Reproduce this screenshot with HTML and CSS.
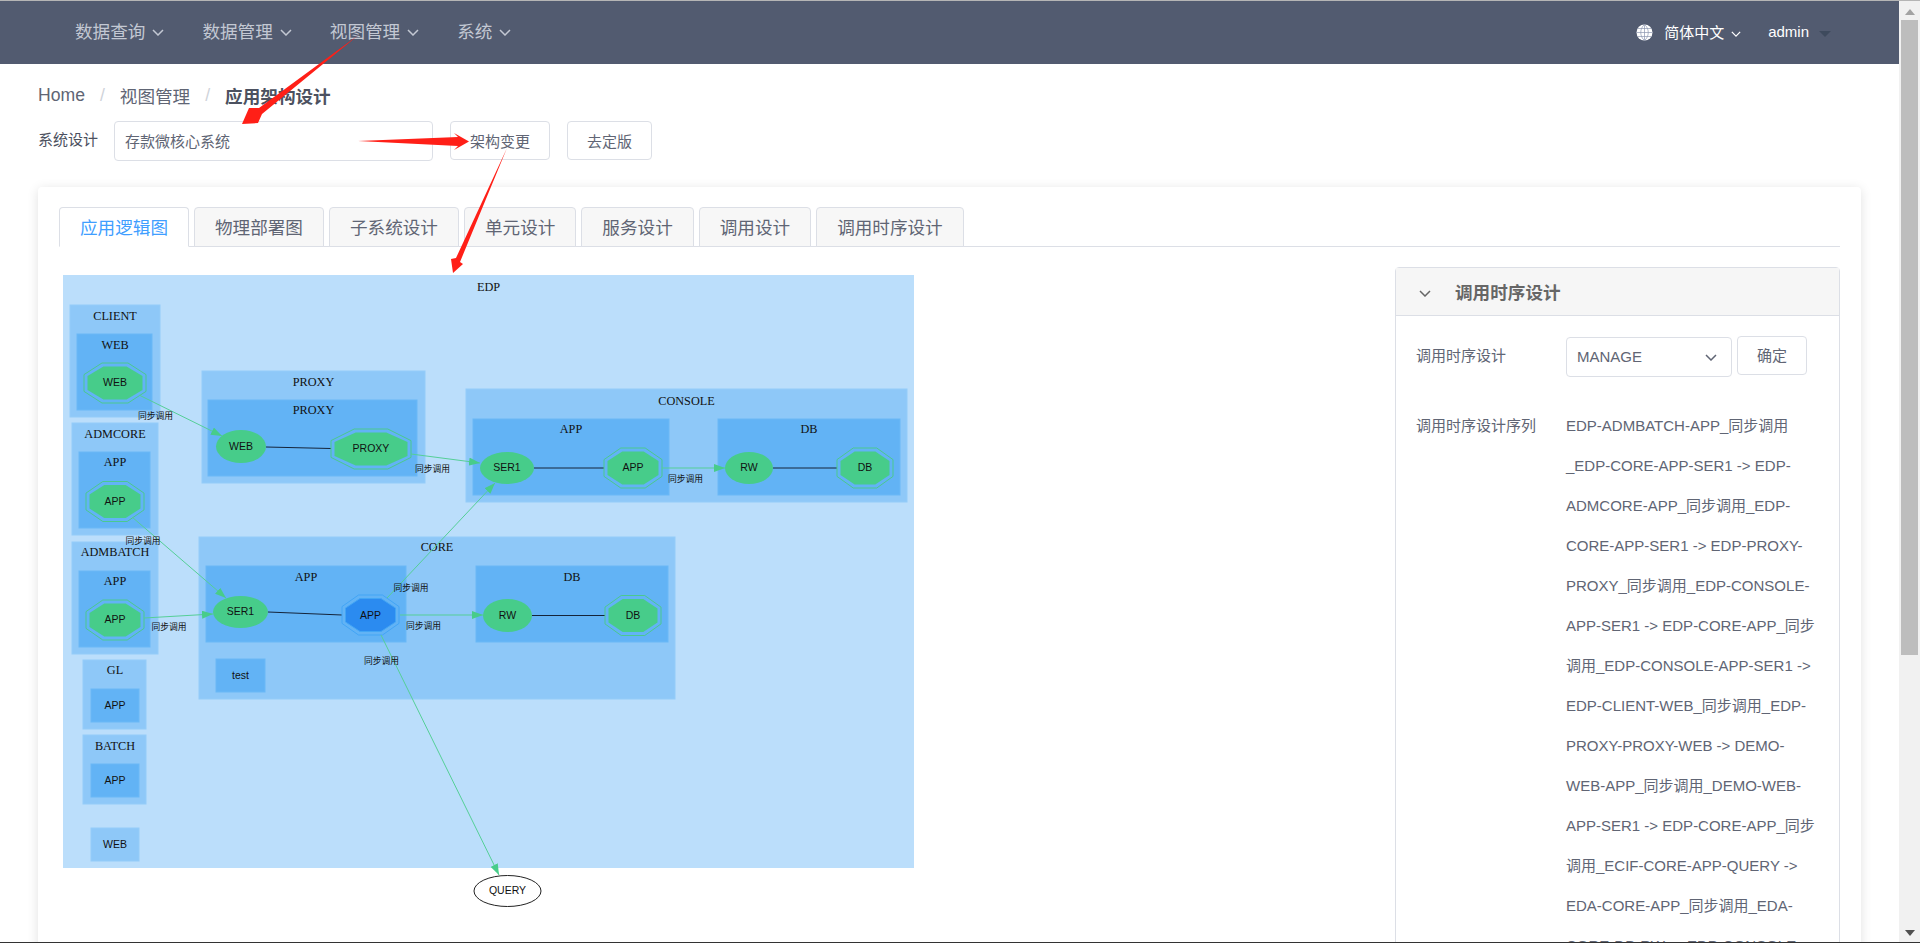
FILE: index.html

```html
<!DOCTYPE html>
<html lang="zh-CN">
<head>
  <meta charset="UTF-8" />
  <title>应用架构设计</title>
  <link rel="stylesheet" href="styles.css">
</head>
<body>

  <svg class="icon-defs" width="0" height="0">
    <symbol id="chevron" viewBox="0 0 12 7"><path d="M1 1 L6 6 L11 1" fill="none" stroke="currentColor" stroke-width="1.5"/></symbol>
  </svg>

  <div class="screen">
    <div class="page">
      <header class="topbar">
        <nav class="menu">
          <a class="menu-item">数据查询<svg class="chevron"><use href="#chevron"/></svg></a>
          <a class="menu-item">数据管理<svg class="chevron"><use href="#chevron"/></svg></a>
          <a class="menu-item">视图管理<svg class="chevron"><use href="#chevron"/></svg></a>
          <a class="menu-item">系统<svg class="chevron"><use href="#chevron"/></svg></a>
        </nav>
        <div class="topbar-right">
          <svg class="globe" viewBox="0 0 17 17">
            <circle cx="8.5" cy="8.5" r="8" fill="#fff"/>
            <path d="M.5 8.5h16M1.6 4.5h13.8M1.6 12.5h13.8M8.5 .5v16M8.5 .5c-5 4-5 12 0 16M8.5 .5c5 4 5 12 0 16" fill="none" stroke="#8d96b0" stroke-width=".7"/>
          </svg>
          <span class="lang">简体中文<svg class="chevron small"><use href="#chevron"/></svg></span>
          <span class="user">admin<i class="caret"></i></span>
        </div>
      </header>

      <div class="breadcrumb">
        <span>Home</span><i class="sep">/</i>
        <span>视图管理</span><i class="sep">/</i>
        <b>应用架构设计</b>
      </div>

      <div class="toolbar">
        <label class="toolbar-label">系统设计</label>
        <div class="text-input">存款微核心系统</div>
        <button class="btn">架构变更</button>
        <button class="btn">去定版</button>
      </div>

      <section class="card">
        <div class="tabs">
          <div class="tab active">应用逻辑图</div>
          <div class="tab">物理部署图</div>
          <div class="tab">子系统设计</div>
          <div class="tab">单元设计</div>
          <div class="tab">服务设计</div>
          <div class="tab">调用设计</div>
          <div class="tab">调用时序设计</div>
        </div>

        <div class="tab-body">
          <svg class="diagram" width="852" height="640" viewBox="63 275 852 640">
            <defs>
              <polygon id="oct" points="-.21,-.5 .21,-.5 .5,-.21 .5,.21 .21,.5 -.21,.5 -.5,.21 -.5,-.21" vector-effect="non-scaling-stroke"/>
              <marker id="head" markerUnits="userSpaceOnUse" markerWidth="11" markerHeight="8" refX="11" refY="4" orient="auto">
                <path d="M0 0 L11 4 L0 8 Z" fill="#48cc8a"/>
              </marker>
            </defs>

            <!-- clusters -->
            <rect class="c1" x="63" y="275" width="851" height="593"/>
            <rect class="c2" x="70" y="305" width="90" height="112"/>
            <rect class="c3" x="77" y="334" width="75" height="76"/>
            <rect class="c2" x="72" y="423" width="86" height="112"/>
            <rect class="c3" x="79" y="452" width="71" height="76"/>
            <rect class="c2" x="72" y="542" width="86" height="112"/>
            <rect class="c3" x="79" y="571" width="71" height="76"/>
            <rect class="c2" x="83" y="660" width="63" height="69"/>
            <rect class="c3" x="91" y="689" width="48" height="33"/>
            <rect class="c2" x="83" y="735" width="63" height="69"/>
            <rect class="c3" x="91" y="764" width="48" height="33"/>
            <rect class="c2" x="91" y="828" width="48" height="33"/>
            <rect class="c2" x="202" y="371" width="223" height="112"/>
            <rect class="c3" x="208" y="400" width="209" height="76"/>
            <rect class="c2" x="466" y="389" width="441" height="113"/>
            <rect class="c3" x="473" y="419" width="196" height="76"/>
            <rect class="c3" x="718" y="419" width="182" height="76"/>
            <rect class="c2" x="199" y="537" width="476" height="162"/>
            <rect class="c3" x="206" y="566" width="200" height="76"/>
            <rect class="c3" x="476" y="566" width="192" height="76"/>
            <rect class="c3" x="216" y="659" width="49" height="33"/>

            <text class="title" x="488.5" y="290.5">EDP</text>
            <text class="title" x="115" y="319.5">CLIENT</text>
            <text class="title" x="115" y="348.5">WEB</text>
            <text class="title" x="115" y="437.5">ADMCORE</text>
            <text class="title" x="115" y="466">APP</text>
            <text class="title" x="115" y="556">ADMBATCH</text>
            <text class="title" x="115" y="585">APP</text>
            <text class="title" x="115" y="674">GL</text>
            <text class="title" x="115" y="749.5">BATCH</text>
            <text class="title" x="313.5" y="385.5">PROXY</text>
            <text class="title" x="313.5" y="414">PROXY</text>
            <text class="title" x="686.5" y="404.5">CONSOLE</text>
            <text class="title" x="571" y="433">APP</text>
            <text class="title" x="809" y="433">DB</text>
            <text class="title" x="437" y="551">CORE</text>
            <text class="title" x="306" y="581">APP</text>
            <text class="title" x="572" y="581">DB</text>

            <!-- lines inside a unit -->
            <line class="link" x1="266" y1="447" x2="331" y2="448.5"/>
            <line class="link" x1="534" y1="468" x2="604" y2="468"/>
            <line class="link" x1="773" y1="468" x2="837" y2="468"/>
            <line class="link" x1="268" y1="612" x2="342" y2="615"/>
            <line class="link" x1="532" y1="615.5" x2="605" y2="615.5"/>

            <!-- nodes -->
            <use class="ring" href="#oct" transform="translate(115 383) scale(62 40)"/>
            <use class="fill" href="#oct" transform="translate(115 383) scale(55 33)"/>
            <use class="ring" href="#oct" transform="translate(115 501.5) scale(58 40)"/>
            <use class="fill" href="#oct" transform="translate(115 501.5) scale(51 33)"/>
            <use class="ring" href="#oct" transform="translate(115 620) scale(58 40)"/>
            <use class="fill" href="#oct" transform="translate(115 620) scale(51 33)"/>
            <use class="ring" href="#oct" transform="translate(371 449) scale(80 40)"/>
            <use class="fill" href="#oct" transform="translate(371 449) scale(73 33)"/>
            <use class="ring" href="#oct" transform="translate(633 468) scale(58 40)"/>
            <use class="fill" href="#oct" transform="translate(633 468) scale(51 33)"/>
            <use class="ring" href="#oct" transform="translate(865 468) scale(56 40)"/>
            <use class="fill" href="#oct" transform="translate(865 468) scale(49 33)"/>
            <use class="ring" href="#oct" transform="translate(633 615.5) scale(56 40)"/>
            <use class="fill" href="#oct" transform="translate(633 615.5) scale(49 33)"/>
            <use class="ring blue" href="#oct" transform="translate(370.5 615) scale(57 40)"/>
            <use class="fill blue" href="#oct" transform="translate(370.5 615) scale(50 33)"/>
            <ellipse class="oval" cx="241" cy="446.5" rx="25" ry="16.5"/>
            <ellipse class="oval" cx="507" cy="468" rx="27" ry="16"/>
            <ellipse class="oval" cx="749" cy="468" rx="24" ry="16"/>
            <ellipse class="oval" cx="240.5" cy="612" rx="27.5" ry="16"/>
            <ellipse class="oval" cx="507.5" cy="615.5" rx="24.5" ry="16.5"/>
            <ellipse class="query" cx="507.5" cy="891" rx="33.5" ry="15.5"/>

            <text class="node" x="115" y="386">WEB</text>
            <text class="node" x="115" y="505">APP</text>
            <text class="node" x="115" y="623">APP</text>
            <text class="node" x="115" y="709">APP</text>
            <text class="node" x="115" y="784">APP</text>
            <text class="node" x="115" y="848">WEB</text>
            <text class="node" x="241" y="450">WEB</text>
            <text class="node" x="371" y="452">PROXY</text>
            <text class="node" x="507" y="471">SER1</text>
            <text class="node" x="633" y="471">APP</text>
            <text class="node" x="749" y="471">RW</text>
            <text class="node" x="865" y="471">DB</text>
            <text class="node" x="240.5" y="615">SER1</text>
            <text class="node" x="370.5" y="619">APP</text>
            <text class="node" x="507.5" y="619">RW</text>
            <text class="node" x="633" y="619">DB</text>
            <text class="node" x="240.5" y="679">test</text>
            <text class="node" x="507.5" y="894">QUERY</text>

            <!-- calls -->
            <line class="call" x1="139" y1="395" x2="222" y2="436"/>
            <line class="call" x1="411" y1="454" x2="480" y2="463"/>
            <line class="call" x1="132" y1="517" x2="226" y2="598"/>
            <line class="call" x1="144" y1="618" x2="213" y2="614"/>
            <line class="call" x1="387" y1="598" x2="495" y2="483"/>
            <line class="call" x1="400" y1="615" x2="483" y2="615"/>
            <line class="call" x1="381" y1="635" x2="499" y2="875"/>
            <line class="call" x1="662" y1="468" x2="725" y2="468"/>

            <text class="edge" x="155.5" y="419">同步调用</text>
            <text class="edge" x="432.5" y="472">同步调用</text>
            <text class="edge" x="143" y="544">同步调用</text>
            <text class="edge" x="169" y="630">同步调用</text>
            <text class="edge" x="411" y="591">同步调用</text>
            <text class="edge" x="423.5" y="629">同步调用</text>
            <text class="edge" x="381.5" y="664">同步调用</text>
            <text class="edge" x="685.5" y="482">同步调用</text>
          </svg>

          <aside class="panel">
            <div class="panel-head">
              <svg class="chevron panel-chevron"><use href="#chevron"/></svg>
              <span>调用时序设计</span>
            </div>
            <div class="panel-body">
              <div class="field">
                <label class="field-label">调用时序设计</label>
                <div class="select">MANAGE<svg class="chevron"><use href="#chevron"/></svg></div>
                <button class="btn confirm">确定</button>
              </div>
              <div class="field seq">
                <label class="field-label">调用时序设计序列</label>
                <div class="seq-text">EDP-ADMBATCH-APP_同步调用_EDP-CORE-APP-SER1 -&gt; EDP-ADMCORE-APP_同步调用_EDP-CORE-APP-SER1 -&gt; EDP-PROXY-PROXY_同步调用_EDP-CONSOLE-APP-SER1 -&gt; EDP-CORE-APP_同步调用_EDP-CONSOLE-APP-SER1 -&gt; EDP-CLIENT-WEB_同步调用_EDP-PROXY-PROXY-WEB -&gt; DEMO-WEB-APP_同步调用_DEMO-WEB-APP-SER1 -&gt; EDP-CORE-APP_同步调用_ECIF-CORE-APP-QUERY -&gt; EDA-CORE-APP_同步调用_EDA-CORE-DB-RW -&gt; EDP-CONSOLE-APP</div>
              </div>
            </div>
          </aside>
        </div>
      </section>
    </div>

    <div class="scrollbar">
      <i class="arrow up"></i>
      <div class="thumb"></div>
      <i class="arrow down"></i>
    </div>

    <!-- red annotations drawn over the page -->
    <svg class="notes" width="1920" height="943" viewBox="0 0 1920 943">
      <polygon points="358.5,35 259,108 249,108 242,124 258,123 262,114"/>
      <polygon points="358,141 458,137 454,133 469,141.5 454,150 458,146"/>
      <polygon points="507,148 456,258 451,259 453,273 463,264 460,262"/>
    </svg>
  </div>

</body>
</html>
```

FILE: styles.css

```css
html, body { margin: 0; height: 100%; overflow: hidden; }
body { font-family: "Liberation Sans", "Noto Sans CJK SC", sans-serif; font-size: 15px; color: #606574; background: #fff; }
.icon-defs { position: absolute; }

.screen { position: relative; display: flex; height: 943px; box-sizing: border-box; border-top: 1px solid #b5b5b5; border-bottom: 1px solid #333; overflow: hidden; }
.page { flex: 1; min-width: 0; overflow: hidden; }

/* top bar */
.topbar { display: flex; align-items: center; height: 63px; background: #525b70; color: #c3c8d3; }
.menu { display: flex; gap: 38px; padding: 0 0 4px 75px; font-size: 17.6px; }
.menu-item { display: flex; align-items: center; white-space: nowrap; }
.chevron { width: 12px; height: 7px; margin-left: 7px; margin-top: 4px; flex: none; }
.chevron.small { width: 10px; height: 6px; margin-left: 7px; }
.topbar-right { display: flex; align-items: center; margin-left: auto; padding: 0 68px 2px 0; color: #fff; }
.globe { width: 17px; height: 17px; margin: 2px 11px 0 0; }
.lang { display: flex; align-items: center; }
.user { display: flex; align-items: center; margin-left: 27px; }
.caret { width: 0; height: 0; margin-left: 10px; margin-top: 4px; border: 6px solid transparent; border-top: 6px solid #3e4a5d; border-bottom: 0; }

/* breadcrumb + toolbar */
.breadcrumb { display: flex; align-items: center; height: 24px; margin: 19px 0 14px 38px; font-size: 17.6px; }
.breadcrumb b { color: #4c5160; }
.sep { margin: 0 15px; color: #cfd3da; font-style: normal; }
.toolbar { display: flex; align-items: flex-start; margin-left: 38px; }
.toolbar-label { width: 76px; line-height: 38px; color: #4c5160; }
.text-input { box-sizing: border-box; width: 319px; height: 40px; margin-right: 17px; padding: 2px 10px 0; line-height: 36px; border: 1px solid #dcdfe6; border-radius: 4px; }
.btn { box-sizing: border-box; height: 39px; margin-right: 17px; padding: 0 19px; font: inherit; color: #606574; background: #fff; border: 1px solid #dcdfe6; border-radius: 4px; }

/* card + tabs */
.card { margin: 26px 38px 0; padding: 20px 21px; background: #fff; border-radius: 4px; box-shadow: 0 2px 12px rgba(0, 0, 0, .12); }
.tabs { display: flex; gap: 5px; height: 39px; border-bottom: 1px solid #dcdfe6; }
.tab { box-sizing: border-box; height: 40px; padding: 0 20px; font-size: 17.6px; line-height: 40px; white-space: nowrap; background: #f7f7f7; border: 1px solid #dcdfe6; border-radius: 4px 4px 0 0; }
.tab.active { color: #409eff; background: #fff; border-bottom-color: #fff; }
.tab-body { display: flex; align-items: flex-start; }

/* diagram */
.diagram { flex: none; margin: 28px 0 0 4px; }
.c1 { fill: #bbdefb; }
.c2 { fill: #8ec8f8; stroke: #94ccf9; }
.c3 { fill: #62b3f5; stroke: #6ab8f6; }
.title { font: 12.25px "Liberation Serif", serif; text-anchor: middle; fill: #111; }
.node { font: 10.5px "Liberation Sans", sans-serif; text-anchor: middle; fill: #111; }
.edge { font: 8.75px "Noto Sans CJK SC", sans-serif; text-anchor: middle; fill: #111; }
.link { stroke: #14243a; stroke-width: 1; }
.call { stroke: #55cf97; stroke-width: 1; marker-end: url(#head); }
.ring { fill: none; stroke: #4bc98f; stroke-width: 1; }
.fill, .oval { fill: #47cc8a; }
.ring.blue { stroke: #42a5f5; }
.fill.blue { fill: #2b8bf0; stroke: #42a5f5; stroke-width: 1; }
.query { fill: #fff; stroke: #222; stroke-width: 1; }

/* right panel */
.panel { flex: none; width: 445px; margin: 20px 0 0 auto; box-sizing: border-box; border: 1px solid #dcdfe6; border-radius: 4px; }
.panel-head { display: flex; align-items: center; height: 47px; background: #f6f6f6; border-bottom: 1px solid #dcdfe6; font-size: 17.6px; font-weight: bold; color: #666; }
.panel-chevron { margin: 3px 24px 0 23px; color: #666; }
.panel-body { padding: 21px 20px 0; }
.field { display: flex; align-items: flex-start; }
.field-label { width: 150px; flex: none; line-height: 38px; }
.select { display: flex; align-items: center; justify-content: space-between; box-sizing: border-box; width: 166px; height: 40px; padding: 0 14px 2px 10px; border: 1px solid #dcdfe6; border-radius: 4px; }
.select .chevron { margin-top: 2px; }
.confirm { width: 70px; margin: -1px 0 0 5px; padding: 0 0 3px; }
.seq { margin-top: 29px; }
.seq .field-label { line-height: 40px; }
.seq-text { width: 250px; line-height: 40px; }

/* scrollbar + frame */
.scrollbar { position: relative; flex: none; display: flex; flex-direction: column; align-items: center; width: 21px; background: #f1f1f1; }
.thumb { width: 17px; height: 635px; margin-top: 5px; background: #bdbdbd; }
.arrow { width: 0; height: 0; border: 5px solid transparent; }
.arrow.up { margin-top: 8px; border-top: 0; border-bottom: 6px solid #a3a3a3; }
.arrow.down { margin-top: auto; margin-bottom: 6px; border-bottom: 0; border-top: 6px solid #505050; }
.notes { position: absolute; left: 0; top: -1px; pointer-events: none; fill: #ff1f17; }
```
